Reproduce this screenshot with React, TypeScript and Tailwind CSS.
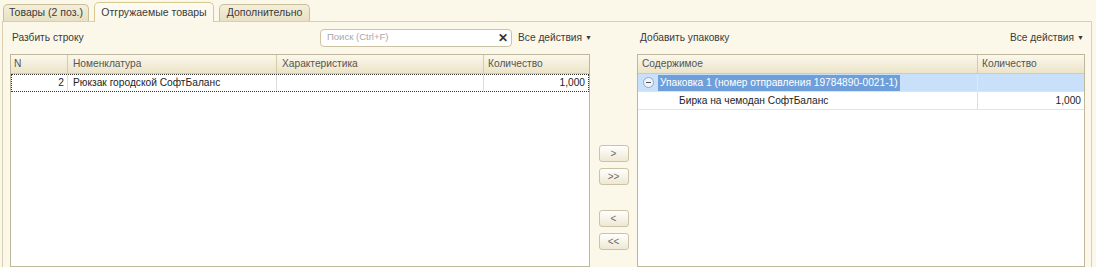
import React from "react";

const Btn = ({ label }: { label: string }) => (
  <div className="w-[30px] h-[17px] rounded-[3px] border border-[#cbc3a3] bg-gradient-to-b from-[#ffffff] to-[#eee8d3] flex items-center justify-center text-[10px] text-[#6a6a6a] leading-none">
    {label}
  </div>
);

export default function App() {
  return (
    <div className="w-[1096px] h-[267px] bg-[#fbf8ea] font-['Liberation_Sans',Arial,sans-serif] text-[10.2px] text-[#3a3a3a] overflow-hidden whitespace-nowrap">
      {/* Tabs */}
      <div className="flex items-end h-[21px] pl-[3px] gap-[5px]">
        <div className="h-[17px] w-[86px] rounded-t-[5px] border border-b-0 border-[#c9bf98] bg-gradient-to-b from-[#f4efdc] to-[#e8e0c4] flex items-center justify-center text-[#3a3a3a] text-[10.5px]">
          Товары (2 поз.)
        </div>
        <div className="h-[20px] w-[120px] rounded-t-[5px] border border-b-0 border-[#d8c98f] bg-gradient-to-b from-[#fdfbf2] to-[#fbf8ea] flex items-center justify-center text-[#3a3a3a] text-[10.5px] relative top-[1px]">
          Отгружаемые товары
        </div>
        <div className="h-[17px] w-[91px] rounded-t-[5px] border border-b-0 border-[#c9bf98] bg-gradient-to-b from-[#f4efdc] to-[#e8e0c4] flex items-center justify-center text-[#3a3a3a] text-[10.5px]">
          Дополнительно
        </div>
      </div>
      {/* Panel */}
      <div className="ml-[2px] mr-[4px] h-[246px] border-l border-t border-r border-[#d6cfb2] flex pl-[7px] pr-[6px] pt-[6px]">
        {/* Left */}
        <div className="w-[580px] shrink-0 flex flex-col">
          <div className="h-[19px] flex items-center">
            <div className="pl-[2px] w-[310px] shrink-0">Разбить строку</div>
            <div className="w-[192px] shrink-0 h-[18px] rounded-[4px] border border-[#cbc3a3] bg-white flex items-center pl-[6px] pr-[3px]">
              <span className="flex-1 text-[9.5px] text-[#a8a8a8]">Поиск (Ctrl+F)</span>
              <span className="text-[12px] font-bold text-[#333] leading-none">✕</span>
            </div>
            <div className="ml-[6px] flex items-center gap-[3px] shrink-0">
              Все действия
              <span className="text-[7px] mt-[1px]">▼</span>
            </div>
          </div>
          <div className="mt-[7px] flex-1 border border-[#bfb79b] bg-white flex flex-col">
            <div className="h-[19px] flex bg-gradient-to-b from-[#fbf8ec] to-[#ece4c8] border-b border-[#d4cbac] text-[#555]">
              <div className="w-[57px] pl-[3px] flex items-center border-r border-[#d4cbac]">N</div>
              <div className="w-[209px] pl-[5px] flex items-center border-r border-[#d4cbac]">Номенклатура</div>
              <div className="w-[207px] pl-[5px] flex items-center border-r border-[#d4cbac]">Характеристика</div>
              <div className="flex-1 pl-[4px] flex items-center">Количество</div>
            </div>
            <div className="h-[18px] flex border border-dotted border-[#333] text-[#1e1e1e]">
              <div className="w-[56px] pr-[3px] flex items-center justify-end border-r border-[#dcdcdc]">2</div>
              <div className="w-[209px] pl-[5px] flex items-center border-r border-[#dcdcdc]">Рюкзак городской СофтБаланс</div>
              <div className="w-[207px] flex items-center border-r border-[#dcdcdc]"></div>
              <div className="flex-1 pr-[3px] flex items-center justify-end">1,000</div>
            </div>
          </div>
        </div>
        {/* Middle */}
        <div className="w-[47px] shrink-0 flex flex-col items-center pt-[117px]">
          <Btn label=">" />
          <div className="mt-[6px]"><Btn label=">>" /></div>
          <div className="mt-[25px]"><Btn label="<" /></div>
          <div className="mt-[6px]"><Btn label="<<" /></div>
        </div>
        {/* Right */}
        <div className="flex-1 flex flex-col">
          <div className="h-[19px] flex items-center justify-between">
            <div className="pl-[3px]">Добавить упаковку</div>
            <div className="flex items-center gap-[3px] pr-[1px]">
              Все действия
              <span className="text-[7px] mt-[1px]">▼</span>
            </div>
          </div>
          <div className="mt-[7px] flex-1 border border-[#bfb79b] bg-white flex flex-col">
            <div className="h-[19px] flex bg-gradient-to-b from-[#fbf8ec] to-[#ece4c8] border-b border-[#d4cbac] text-[#555]">
              <div className="w-[340px] pl-[4px] flex items-center border-r border-[#d4cbac]">Содержимое</div>
              <div className="flex-1 pl-[4px] flex items-center">Количество</div>
            </div>
            <div className="h-[18px] flex bg-[#c8e0fa] border-b border-[#e3e3e3]">
              <div className="w-[340px] flex items-center border-r border-[#e0e8f0]">
                <span className="ml-[5px] w-[11px] h-[11px] rounded-full border border-[#8fa8c4] bg-[#eef4fb] flex items-center justify-center">
                  <span className="w-[5px] h-[1px] bg-[#556]"></span>
                </span>
                <span className="ml-[4px] h-[16px] flex items-center px-[2px] bg-[#6f9fdb] text-white">
                  Упаковка 1 (номер отправления 19784890-0021-1)
                </span>
              </div>
              <div className="flex-1"></div>
            </div>
            <div className="h-[18px] flex border-b border-[#e3e3e3] text-[#1e1e1e]">
              <div className="w-[340px] pl-[41px] flex items-center border-r border-[#dcdcdc]">Бирка на чемодан СофтБаланс</div>
              <div className="flex-1 pr-[3px] flex items-center justify-end">1,000</div>
            </div>
          </div>
        </div>
      </div>
    </div>
  );
}
